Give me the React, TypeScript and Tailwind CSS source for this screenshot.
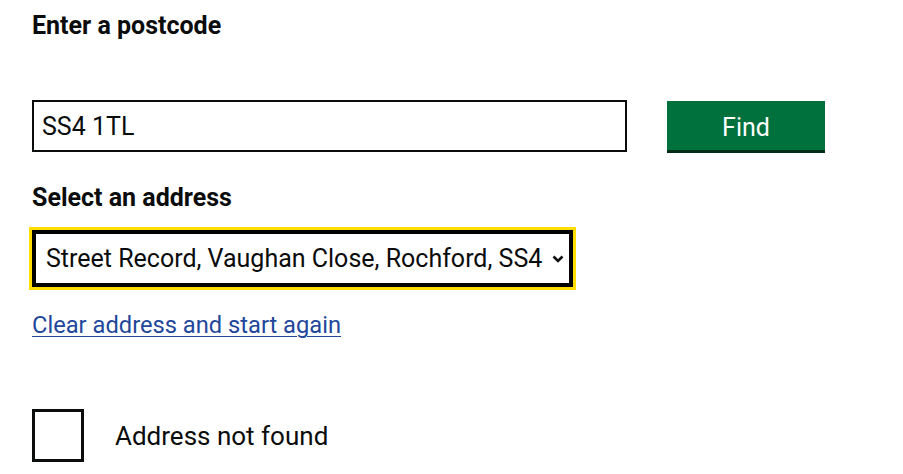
import React from "react";

export default function App() {
  return (
    <div
      className="min-h-[474px] w-[903px] bg-white pl-[32px] pt-[10px] text-[#0b0c0c]"
      style={{ fontFamily: "Roboto, 'Noto Sans', sans-serif" }}
    >
      <div className="text-[25px] font-bold leading-[32px]">Enter a postcode</div>

      <div className="mt-[58px] flex items-start">
        <input
          readOnly
          value="SS4 1TL"
          className="h-[52px] w-[595px] border-2 border-[#0b0c0c] bg-white px-[8px] text-[25px] text-[#0b0c0c] outline-none"
          style={{ fontFamily: "Roboto, 'Noto Sans', sans-serif" }}
        />
        <button
          className="ml-[40px] mt-[1px] h-[49px] w-[158px] bg-[#00703c] pt-[3px] text-[25px] leading-none text-white shadow-[0_3px_0_#002d18]"
          style={{ fontFamily: "Roboto, 'Noto Sans', sans-serif" }}
        >
          Find
        </button>
      </div>

      <div className="mt-[30px] text-[25px] font-bold leading-[32px]">Select an address</div>

      <div className="mt-[16px] flex h-[57px] w-[541px] items-center justify-between border-4 border-black bg-white pl-[10px] pr-[5px] text-[25px] outline outline-[3px] outline-[#ffdd00]">
        <span className="whitespace-nowrap">Street Record, Vaughan Close, Rochford, SS4</span>
        <svg width="12" height="8" viewBox="0 0 12 8" className="mt-[1px] shrink-0">
          <path d="M1.5 1.5 L6 6 L10.5 1.5" fill="none" stroke="#111" strokeWidth="2.6" />
        </svg>
      </div>

      <div className="mt-[22px] leading-[32px]">
        <a
          href="#"
          className="text-[23.7px] text-[#23479a] underline decoration-1 underline-offset-[3px]"
        >
          Clear address and start again
        </a>
      </div>

      <div className="mt-[65px] flex items-center">
        <div className="h-[53px] w-[52px] border-[3px] border-[#0b0c0c] bg-white" />
        <span className="ml-[31px] text-[26px] leading-[32px]">Address not found</span>
      </div>
    </div>
  );
}
